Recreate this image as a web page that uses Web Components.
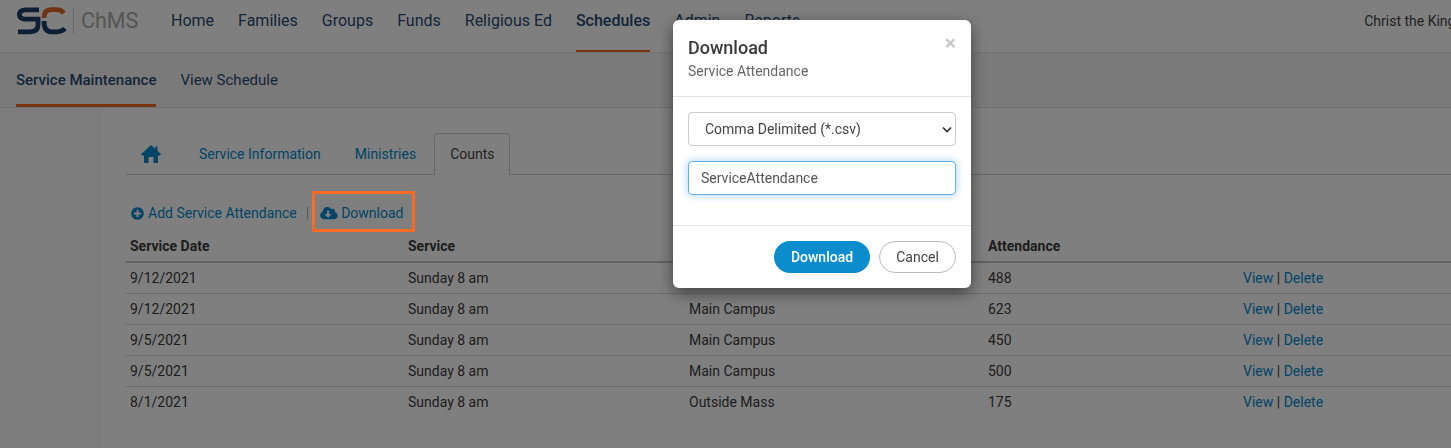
<!DOCTYPE html>
<html>
<head>
<meta charset="utf-8">
<title>Service Maintenance</title>
<style>
html, body { margin: 0; height: 100%; overflow: hidden; background: #fff; }
body { font-family: Roboto, "Liberation Sans", sans-serif; color: #3a3a3a; }
</style>
</head>
<body>
<sc-header></sc-header>
<sc-subnav></sc-subnav>
<sc-page>
  <sc-tabs></sc-tabs>
  <sc-actions></sc-actions>
  <sc-table></sc-table>
</sc-page>
<sc-modal></sc-modal>

<script>
const LINK = "#0088cc";
const NAVY = "#2a4a73";
const ORANGE = "#f26a21";

const ICONS = {
  home: `<svg viewBox="0 0 20 18"><path fill="currentColor" d="M10 0 L14.500 4 V1.500 H16.500 V5.800 L20 9.300 L19 10.500 H17 V17.200 Q17 18 16.200 18 H12.500 V12.500 Q12.500 12 12 12 H8 Q7.500 12 7.500 12.500 V18 H3.800 Q3 18 3 17.200 V10.500 H1 L0 9.300 Z"/></svg>`,
  plus: `<svg viewBox="0 0 512 512"><path fill="currentColor" d="M256 8C119 8 8 119 8 256s111 248 248 248 248-111 248-248S393 8 256 8zm144 276c0 6.6-5.4 12-12 12h-92v92c0 6.6-5.4 12-12 12h-56c-6.6 0-12-5.4-12-12v-92h-92c-6.6 0-12-5.4-12-12v-56c0-6.6 5.4-12 12-12h92v-92c0-6.6 5.4-12 12-12h56c6.6 0 12 5.4 12 12v92h92c6.6 0 12 5.4 12 12v56z"/></svg>`,
  cloud: `<svg viewBox="0 0 640 512"><path fill="currentColor" d="M537.6 226.6c4.1-10.7 6.4-22.4 6.4-34.6 0-53-43-96-96-96-19.7 0-38.1 6-53.3 16.2C367 64.2 315.3 32 256 32c-88.4 0-160 71.6-160 160 0 2.7.1 5.4.2 8.1C40.2 219.8 0 273.2 0 336c0 79.5 64.5 144 144 144h368c70.7 0 128-57.3 128-128 0-61.9-44-113.6-102.4-125.4zm-132.9 88.7L299.3 420.7c-6.2 6.2-16.4 6.2-22.6 0L171.3 315.3c-10.1-10.1-2.9-27.3 11.3-27.3H248V176c0-8.8 7.2-16 16-16h48c8.8 0 16 7.2 16 16v112h65.4c14.2 0 21.4 17.2 11.3 27.3z"/></svg>`
};

const ROWS = [
  ["9/12/2021", "Sunday 8 am", "Main Campus", "488"],
  ["9/12/2021", "Sunday 8 am", "Main Campus", "623"],
  ["9/5/2021", "Sunday 8 am", "Main Campus", "450"],
  ["9/5/2021", "Sunday 8 am", "Main Campus", "500"],
  ["8/1/2021", "Sunday 8 am", "Outside Mass", "175"]
];

class Base extends HTMLElement {
  constructor() {
    super();
    this.attachShadow({ mode: "open" });
    this.shadowRoot.innerHTML = this.markup();
  }
}

class ScHeader extends Base {
  markup() {
    var items = ["Home", "Families", "Groups", "Funds", "Religious Ed", "Schedules", "Admin", "Reports"];
    return `
    <style>
    :host { display: flex; height: 53px; box-sizing: border-box; border-bottom: 1px solid #e8e8e8; background: #fff; overflow: hidden; }
    .logo { flex: none; display: flex; align-items: center; width: 171px; height: 42px; }
    .logo svg { display: block; flex: none; margin-left: 16px; }
    .logo span { font-size: 21.5px; color: #aaa; margin-left: 7px; line-height: 42px; }
    nav { flex: none; display: flex; gap: 24px; }
    nav a { font-size: 16px; line-height: 42px; height: 50px; box-sizing: content-box; color: ${NAVY}; }
    nav a.on { font-weight: 500; border-bottom: 2px solid ${ORANGE}; margin-bottom: -1px; }
    .org { flex: none; margin-left: 564px; font-size: 14px; line-height: 42px; color: #444; white-space: nowrap; }
    </style>
    <div class="logo">
      <svg width="58" height="30" viewBox="16 6 58 30" fill="none" stroke-width="4.800">
        <path stroke="#1d3c66" d="M38 17 V25 C38 30 35 31.800 30 31.800 H18"/>
        <path stroke="#1d3c66" d="M39 9.800 H26 C20.500 9.800 19.400 12.500 19.400 14.800 C19.400 17.500 22 19.200 26 19.200 H40"/>
        <path stroke="#e0662a" d="M64 13 C62 10.500 59.500 9.600 56 9.600 H51 C46 9.600 44 13 44 18"/>
        <path stroke="#1d3c66" d="M44 21 C44 28 46 31.800 51 31.800 H57 C60.500 31.800 63 30.800 65 28.500"/>
        <path stroke="#ccc" stroke-width="1" d="M73.500 8 V34"/>
      </svg>
      <span>ChMS</span>
    </div>
    <nav>${items.map(t => `<a class="${t == "Schedules" ? "on" : ""}">${t}</a>`).join("")}</nav>
    <div class="org">Christ the King</div>
    `;
  }
}

class ScSubnav extends Base {
  markup() {
    return `
    <style>
    :host { display: flex; gap: 24px; height: 55px; box-sizing: border-box; padding-left: 16px; background: #f5f5f5; border-bottom: 1px solid #e4e4e4; }
    a { font-size: 15px; line-height: 54px; color: ${NAVY}; height: 51px; }
    a.on { font-weight: 500; border-bottom: 3px solid ${ORANGE}; }
    </style>
    <a class="on">Service Maintenance</a>
    <a>View Schedule</a>
    `;
  }
}

class ScPage extends Base {
  markup() {
    return `
    <style>
    :host { display: flex; height: 340px; }
    .side { flex: none; width: 102px; background: #f9f9f9; }
    .main { flex: 1; min-width: 0; padding: 25px 0 0 24px; background: #fff; }
    </style>
    <div class="side"></div>
    <div class="main"><slot></slot></div>
    `;
  }
}

class ScTabs extends Base {
  markup() {
    return `
    <style>
    :host { display: flex; height: 42px; box-sizing: border-box; border-bottom: 1px solid #d0d0d0; font-size: 14px; }
    a { display: block; box-sizing: border-box; height: 42px; padding: 0 16px; line-height: 41px; color: ${LINK}; border: 1px solid transparent; border-bottom: 0; }
    a.home { width: 56px; padding: 0 0 0 14px; color: ${LINK}; }
    a.home svg { display: block; width: 20px; height: 18px; margin-top: 11px; }
    a.on { color: #444; border-color: #d0d0d0; background: #fff; height: 42px; margin-left: 1px; padding: 0 15px; border-radius: 4px 4px 0 0; }
    </style>
    <a class="home">${ICONS.home}</a>
    <a>Service Information</a>
    <a>Ministries</a>
    <a class="on">Counts</a>
    `;
  }
}

class ScActions extends Base {
  markup() {
    return `
    <style>
    :host { display: flex; align-items: center; height: 38px; margin: 19px 0 1px; padding-left: 5px; font-size: 14px; color: ${LINK}; position: relative; }
    a { display: flex; align-items: center; }
    a svg { display: block; flex: none; }
    .plus svg { width: 13px; height: 13px; margin-right: 4px; }
    .cloud svg { width: 18px; height: 14px; margin-right: 3px; }
    .sep { color: #aaa; margin: 0 11px 0 9px; }
    /* call-out drawn on the screenshot, sits above the modal backdrop */
    .mark { position: absolute; left: 186px; top: -3px; width: 103px; height: 41px; box-sizing: border-box; border: 3px solid #fb6b26; z-index: 20; }
    </style>
    <a class="plus">${ICONS.plus}Add Service Attendance</a>
    <span class="sep">|</span>
    <a class="cloud">${ICONS.cloud}Download</a>
    <div class="mark"></div>
    `;
  }
}

class ScTable extends Base {
  markup() {
    var row = r => `<div class="row">${r.map(c => `<span>${c}</span>`).join("")}<span><a>View</a> | <a>Delete</a></span></div>`;
    return `
    <style>
    :host { display: block; font-size: 14px; color: #3a3a3a; }
    .row { display: grid; grid-template-columns: 278px 281px 299px 255px 1fr; height: 31px; box-sizing: border-box; padding-left: 4px; line-height: 30px; border-bottom: 1px solid #d8d8d8; }
    .row:last-child { border-bottom: 0; }
    .head { height: 30px; line-height: 26px; font-weight: 700; border-bottom: 2px solid #c4c4c4; }
    a { color: ${LINK}; }
    </style>
    <div class="row head"><span>Service Date</span><span>Service</span><span>Campus</span><span>Attendance</span><span></span></div>
    ${ROWS.map(row).join("")}
    `;
  }
}

class ScModal extends Base {
  markup() {
    return `
    <style>
    :host { position: fixed; inset: 0; z-index: 10; display: flex; align-items: flex-start; padding: 20px 0 0 673px; background: rgba(0,0,0,.5); font-size: 14px; color: #444; }
    .box { width: 298px; height: 268px; box-sizing: border-box; background: #fff; border-radius: 6px; box-shadow: 0 5px 15px rgba(0,0,0,.5); display: flex; flex-direction: column; }
    header { display: flex; justify-content: space-between; height: 77px; box-sizing: border-box; padding: 16px 15px 0; border-bottom: 1px solid #e5e5e5; }
    h4 { margin: 0; font-size: 18px; font-weight: 500; line-height: 24px; color: #3a3a3a; }
    p { margin: 1px 0 0; font-size: 14px; line-height: 20px; color: #666; }
    .x { font-size: 21px; font-weight: 700; line-height: 14px; color: #c8c8c8; margin-top: 0; }
    .body { height: 129px; box-sizing: border-box; padding: 15px 15px 0; display: flex; flex-direction: column; gap: 15px; border-bottom: 1px solid #e5e5e5; }
    .pick { display: grid; align-items: center; height: 34px; }
    .pick > * { grid-area: 1 / 1; }
    select { appearance: none; width: 100%; height: 34px; box-sizing: border-box; padding: 0 16px; border: 1px solid #ccc; border-radius: 4px; background: #fff; font: 14px Roboto, sans-serif; color: #444; }
    .pick svg { justify-self: end; margin-right: 4px; pointer-events: none; }
    input { height: 34px; box-sizing: border-box; padding: 0 12px; border: 1px solid #66afe9; border-radius: 4px; outline: 0; box-shadow: 0 0 8px rgba(102,175,233,.6); font: 14px Roboto, sans-serif; color: #555; }
    footer { flex: 1; display: flex; justify-content: flex-end; gap: 9px; padding: 15px 15px 0; }
    button { height: 32px; border-radius: 16px; font: 14px Roboto, sans-serif; padding: 0; }
    .go { width: 96px; border: 0; background: #0b8ccc; color: #fff; font-weight: 500; }
    .no { width: 77px; border: 1px solid #bbb; background: #fff; color: #444; }
    </style>
    <div class="box">
      <header>
        <div><h4>Download</h4><p>Service Attendance</p></div>
        <span class="x">×</span>
      </header>
      <div class="body">
        <div class="pick">
          <select><option>Comma Delimited (*.csv)</option></select>
          <svg width="10" height="7" viewBox="0 0 10 7" fill="none"><path d="M1 1.500 L5 5.500 L9 1.500" stroke="#333" stroke-width="1.700"/></svg>
        </div>
        <input value="ServiceAttendance">
      </div>
      <footer>
        <button class="go">Download</button>
        <button class="no">Cancel</button>
      </footer>
    </div>
    `;
  }
}

customElements.define("sc-header", ScHeader);
customElements.define("sc-subnav", ScSubnav);
customElements.define("sc-page", ScPage);
customElements.define("sc-tabs", ScTabs);
customElements.define("sc-actions", ScActions);
customElements.define("sc-table", ScTable);
customElements.define("sc-modal", ScModal);
</script>
</body>
</html>
